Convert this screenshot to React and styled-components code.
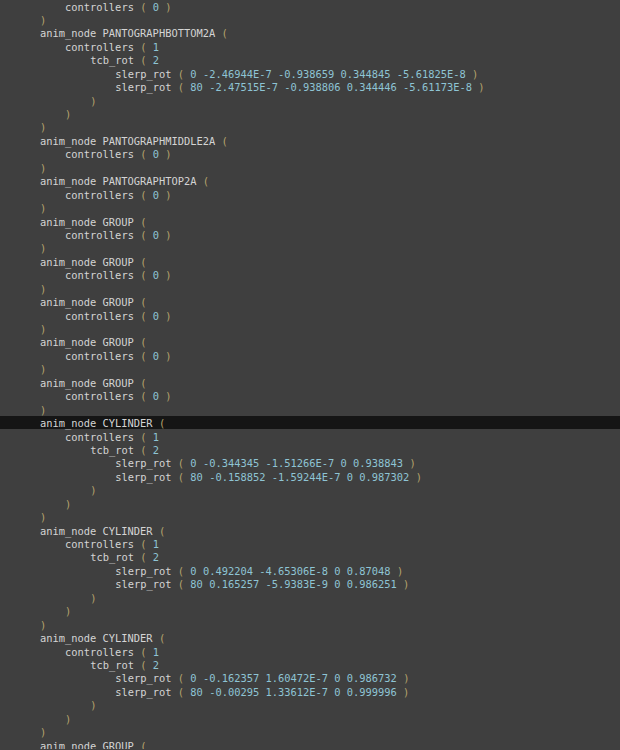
import React from 'react';
import styled, { createGlobalStyle } from 'styled-components';

const GlobalStyle = createGlobalStyle`
  html, body {
    margin: 0;
    padding: 0;
    background: #3f3f3f;
  }
`;

const Editor = styled.div`
  width: 620px;
  height: 750px;
  overflow: hidden;
  background: #3f3f3f;
  font-family: "DejaVu Sans Mono", "Liberation Mono", monospace;
  font-size: 10.4px;
  line-height: 13.44px;
  color: #d4d4d4;
  margin-top: -1px;
`;

const Line = styled.div`
  box-sizing: border-box;
  height: 13.44px;
  padding-top: 1.5px;
  padding-left: ${(p) => 40 + p.$level * 25.08}px;
  white-space: pre;
  background: ${(p) => (p.$current ? '#151515' : 'transparent')};
`;

const Word = styled.span`
  color: #d4d4d4;
`;

const Paren = styled.span`
  color: #b5a36c;
`;

const Num = styled.span`
  color: #8ec4d4;
`;

const slerp = (a, b) => [
  [0, 'anim_node CYLINDER ('],
  [1, 'controllers ( 1'],
  [2, 'tcb_rot ( 2'],
  [3, `slerp_rot ( ${a} )`],
  [3, `slerp_rot ( ${b} )`],
  [2, ')'],
  [1, ')'],
  [0, ')'],
];

const group = (name) => [
  [0, `anim_node ${name} (`],
  [1, 'controllers ( 0 )'],
  [0, ')'],
];

const lines = [
  [1, 'controllers ( 0 )'],
  [0, ')'],
  [0, 'anim_node PANTOGRAPHBOTTOM2A ('],
  [1, 'controllers ( 1'],
  [2, 'tcb_rot ( 2'],
  [3, 'slerp_rot ( 0 -2.46944E-7 -0.938659 0.344845 -5.61825E-8 )'],
  [3, 'slerp_rot ( 80 -2.47515E-7 -0.938806 0.344446 -5.61173E-8 )'],
  [2, ')'],
  [1, ')'],
  [0, ')'],
  ...group('PANTOGRAPHMIDDLE2A'),
  ...group('PANTOGRAPHTOP2A'),
  ...group('GROUP'),
  ...group('GROUP'),
  ...group('GROUP'),
  ...group('GROUP'),
  ...group('GROUP'),
  ...slerp('0 -0.344345 -1.51266E-7 0 0.938843', '80 -0.158852 -1.59244E-7 0 0.987302'),
  ...slerp('0 0.492204 -4.65306E-8 0 0.87048', '80 0.165257 -5.9383E-9 0 0.986251'),
  ...slerp('0 -0.162357 1.60472E-7 0 0.986732', '80 -0.00295 1.33612E-7 0 0.999996'),
  [0, 'anim_node GROUP ('],
  [1, 'controllers ( 0 )'],
  [0, ')'],
];

const CURRENT = 31;

const tokenize = (text) =>
  text.split(/(\s+|[()])/).filter(Boolean).map((tok, i) => {
    if (tok === '(' || tok === ')') return <Paren key={i}>{tok}</Paren>;
    if (/^-?\d/.test(tok)) return <Num key={i}>{tok}</Num>;
    if (/^\s+$/.test(tok)) return tok;
    return <Word key={i}>{tok}</Word>;
  });

export default function App() {
  return (
    <>
      <GlobalStyle />
      <Editor>
        {lines.map(([level, text], i) => (
          <Line key={i} $level={level} $current={i === CURRENT}>
            {tokenize(text)}
          </Line>
        ))}
      </Editor>
    </>
  );
}
